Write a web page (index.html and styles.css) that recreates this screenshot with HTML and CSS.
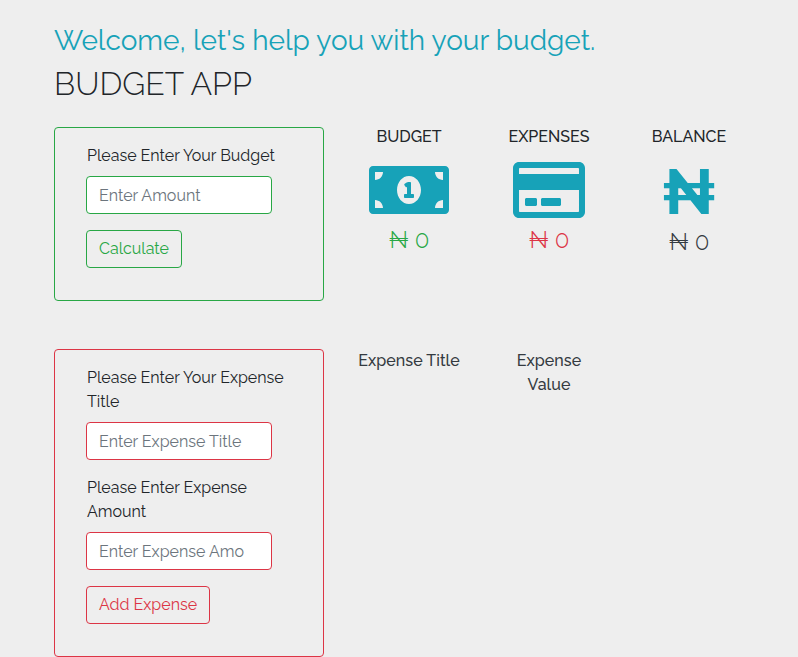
FILE: index.html
```html
<!DOCTYPE html>
<html lang="en">
<head>
<meta charset="utf-8">
<title>Budget App</title>
<link rel="stylesheet" href="styles.css">
</head>
<body>
<main class="container">
  <h3 class="welcome">Welcome, let's help you with your budget.</h3>
  <h2 class="title">BUDGET APP</h2>

  <section class="row">
    <form class="panel panel-green">
      <label class="label" for="budget">Please Enter Your Budget</label>
      <input class="input" id="budget" type="text" placeholder="Enter Amount">
      <button class="button calc" type="button">Calculate</button>
    </form>
    <div class="stats">
      <div class="stat">
        <h6 class="stat-name">BUDGET</h6>
        <svg class="icon" width="80" height="64" viewBox="0 0 640 512"><path d="M352 288h-16v-88c0-4.42-3.58-8-8-8h-13.58c-4.74 0-9.37 1.4-13.31 4.03l-15.33 10.22a7.994 7.994 0 0 0-2.22 11.09l8.88 13.31a7.994 7.994 0 0 0 11.09 2.22l.47-.31V288h-16c-4.42 0-8 3.58-8 8v16c0 4.42 3.58 8 8 8h64c4.42 0 8-3.58 8-8v-16c0-4.42-3.58-8-8-8zM608 64H32C14.33 64 0 78.33 0 96v320c0 17.67 14.33 32 32 32h576c17.67 0 32-14.33 32-32V96c0-17.67-14.33-32-32-32zM48 400v-64c35.35 0 64 28.65 64 64H48zm0-224v-64h64c0 35.35-28.65 64-64 64zm272 192c-53.02 0-96-50.15-96-112 0-61.86 42.98-112 96-112s96 50.14 96 112c0 61.87-43 112-96 112zm272 32h-64c0-35.35 28.65-64 64-64v64zm0-224c-35.35 0-64-28.65-64-64h64v64z"/></svg>
        <p class="amount green"><span>₦</span><span>0</span></p>
      </div>
      <div class="stat">
        <h6 class="stat-name">EXPENSES</h6>
        <svg class="icon" width="72" height="64" viewBox="0 0 576 512"><path d="M527.9 32H48.1C21.5 32 0 53.5 0 80v352c0 26.5 21.5 48 48.1 48h479.8c26.6 0 48.1-21.5 48.1-48V80c0-26.5-21.5-48-48.1-48zM54.1 80h467.8c3.3 0 6 2.7 6 6v42H48.1V86c0-3.3 2.7-6 6-6zm467.8 352H54.1c-3.3 0-6-2.7-6-6V256h479.8v170c0 3.3-2.7 6-6 6zM192 332v40c0 6.6-5.4 12-12 12h-72c-6.6 0-12-5.4-12-12v-40c0-6.6 5.4-12 12-12h72c6.6 0 12 5.4 12 12zm192 0v40c0 6.6-5.4 12-12 12H236c-6.6 0-12-5.4-12-12v-40c0-6.6 5.4-12 12-12h136c6.6 0 12 5.4 12 12z"/></svg>
        <p class="amount red"><span>₦</span><span>0</span></p>
      </div>
      <div class="stat">
        <h6 class="stat-name">BALANCE</h6>
        <span class="big-naira">₦</span>
        <p class="amount dark"><span>₦</span><span>0</span></p>
      </div>
    </div>
  </section>

  <section class="row">
    <form class="panel panel-red">
      <label class="label" for="etitle">Please Enter Your Expense Title</label>
      <input class="input" id="etitle" type="text" placeholder="Enter Expense Title">
      <label class="label" for="evalue">Please Enter Expense Amount</label>
      <input class="input" id="evalue" type="text" placeholder="Enter Expense Amo">
      <button class="button add" type="button">Add Expense</button>
    </form>
    <div class="stats">
      <h6 class="stat column-name">Expense Title</h6>
      <h6 class="stat column-name">Expense Value</h6>
      <div class="stat"></div>
    </div>
  </section>
</main>
</body>
</html>
```
FILE: styles.css
```css
* { box-sizing: border-box; }
body {
  margin: 0;
  background: #eee;
  color: #212529;
  font: 400 16px/24px Raleway, "Open Sans", sans-serif;
}
h2, h3, h6, p { margin: 0; }
.container { width: 705px; margin-left: 54px; padding-top: 23px; }
.welcome { font-size: 28px; font-weight: 400; line-height: 36px; color: #17a2b8; margin-bottom: 6px; white-space: nowrap; }
.title { font-size: 32px; font-weight: 300; line-height: 38px; margin-bottom: 24px; }
.row { display: flex; gap: 15px; align-items: flex-start; }
.row + .row { margin-top: 48px; }
.panel { width: 270px; border: 1px solid; border-radius: 4px; padding: 16px 31px 32px; display: flex; flex-direction: column; align-items: flex-start; }
.panel-green { border-color: #28a745; color: #28a745; }
.panel-red { border-color: #dc3545; color: #dc3545; }
.label { color: #212529; margin: 0 0 8px 1px; }
.input { width: 186px; height: 38px; border: 1px solid; border-radius: 4px; background: #fff; padding: 6px 12px; font: inherit; margin: 0 0 16px; }
.panel-green .input { border-color: #28a745; }
.panel-red .input { border-color: #dc3545; }
.input::placeholder { color: #6c757d; opacity: 1; }
.button { height: 38px; border: 1px solid currentColor; border-radius: 4px; background: transparent; color: inherit; font: inherit; padding: 0 0 0 12px; text-align: left; white-space: nowrap; }
.calc { width: 96px; }
.add { width: 124px; }
.stats { display: flex; }
.stat { width: 140px; text-align: center; display: flex; flex-direction: column; align-items: center; }
.stat-name { font-size: 16px; font-weight: 500; line-height: 19px; margin-bottom: 12px; }
.icon { display: block; fill: #17a2b8; }
.big-naira { font-size: 64px; font-weight: 700; line-height: 68px; height: 66px; color: #17a2b8; }
.amount { display: flex; gap: 6px; font-size: 24px; font-weight: 300; line-height: 30px; margin-top: 3px; }
.green { color: #28a745; }
.red { color: #dc3545; }
.dark { color: #343a40; }
.column-name { font-size: 16px; font-weight: 500; line-height: 24px; color: #343a40; padding: 0 15px; display: block; letter-spacing: .06px; }
```
